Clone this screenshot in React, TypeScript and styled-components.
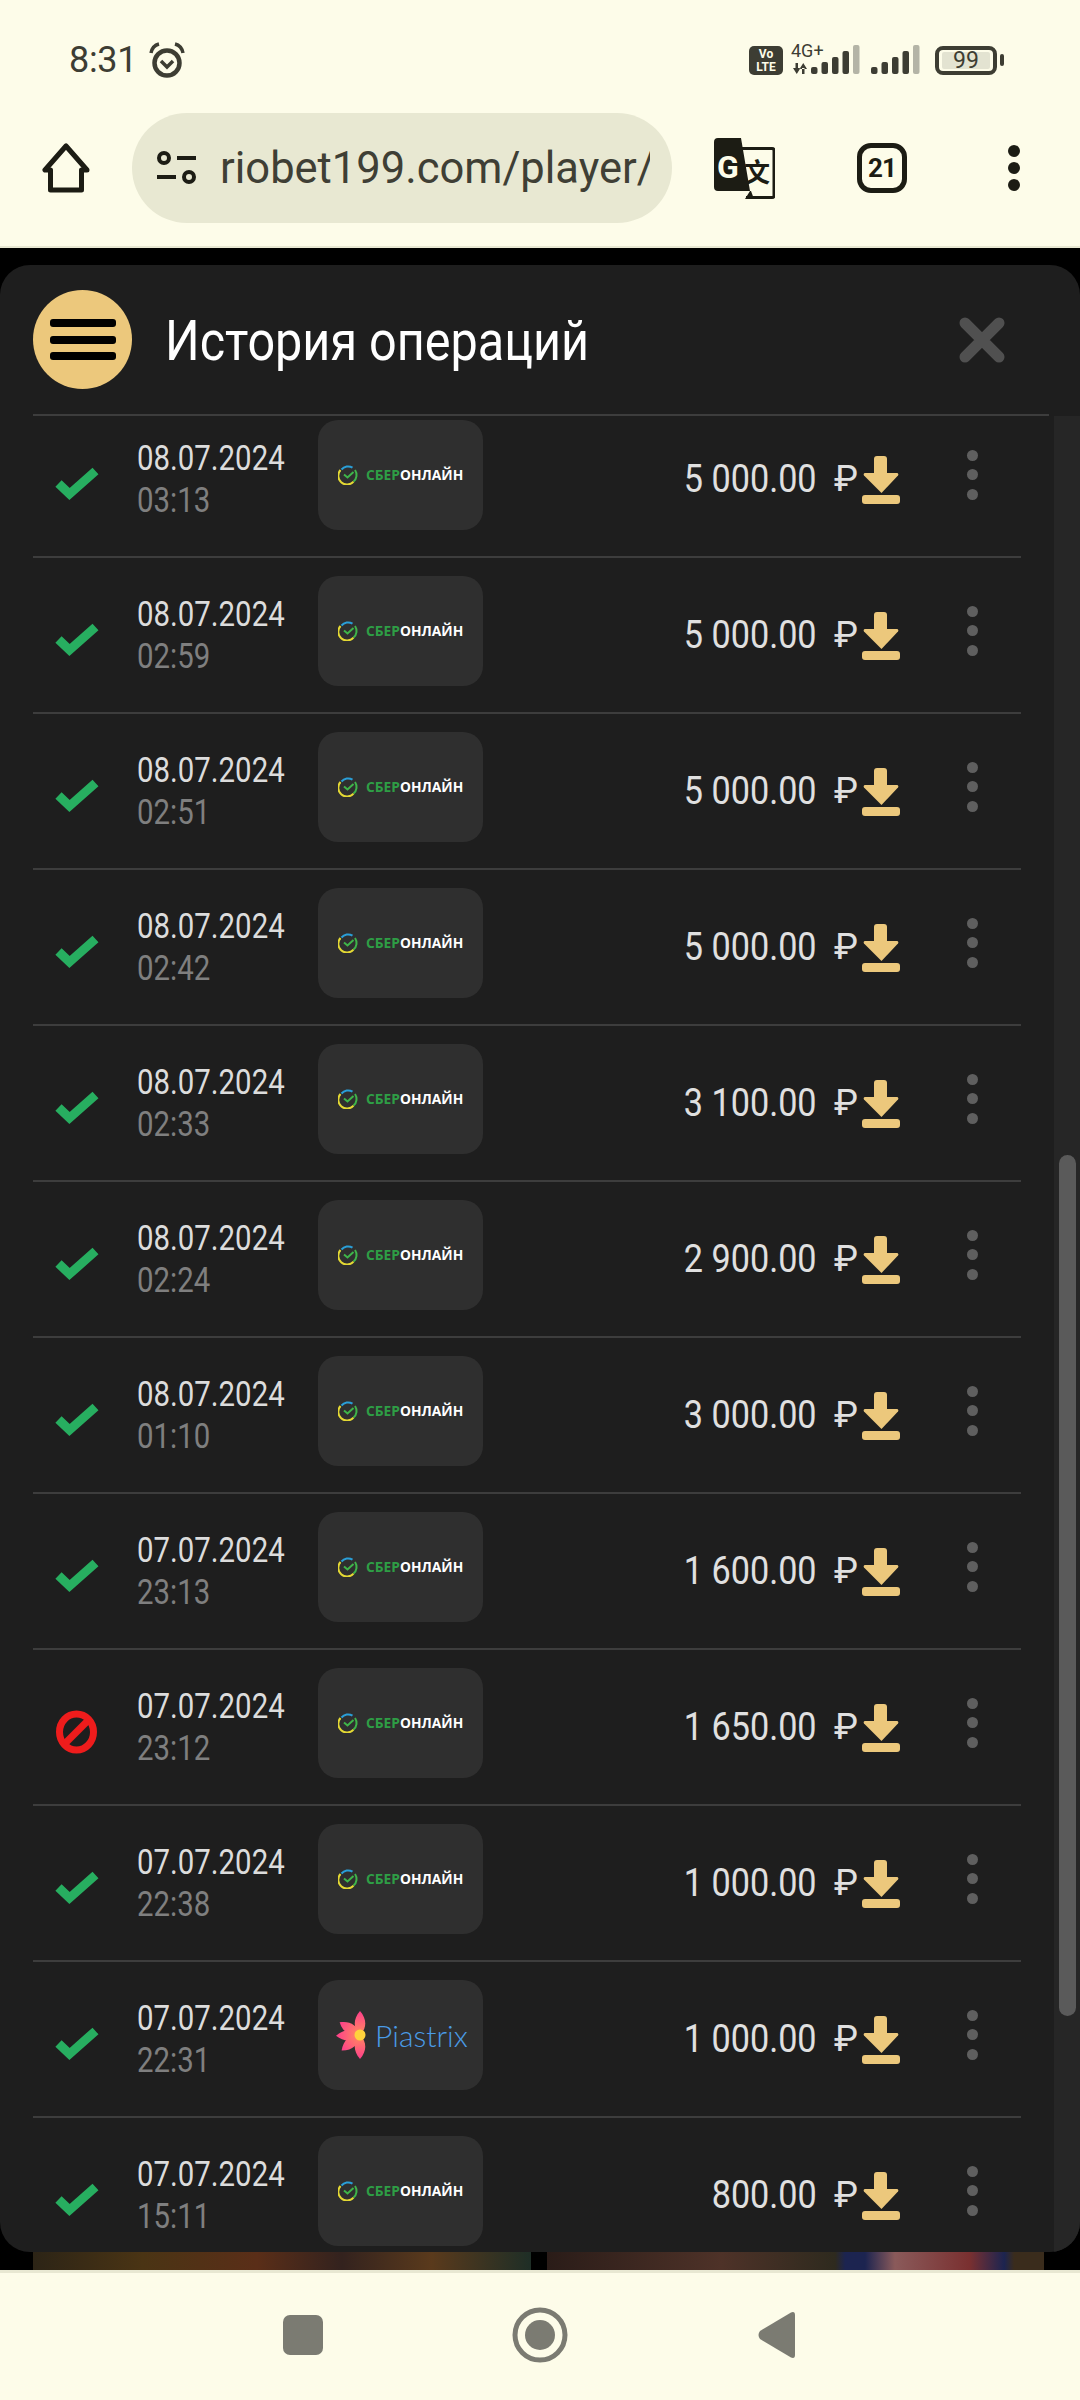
import React from 'react';
import styled, { createGlobalStyle } from 'styled-components';

const GlobalStyle = createGlobalStyle`
  html, body { margin: 0; padding: 0; background: #000; }
  * { box-sizing: border-box; }
  #root { width: 1080px; height: 2400px; overflow: hidden; }
`;

const Page = styled.div`
  width: 1080px;
  height: 2400px;
  display: flex;
  flex-direction: column;
  background: #000;
  font-family: Roboto, 'Liberation Sans', sans-serif;
`;

/* status bar */
const StatusBar = styled.div`
  height: 110px;
  padding: 40px 76px 30px 69px;
  background: #fdfce9;
  display: flex;
  align-items: center;
  justify-content: space-between;
  color: #3d3d33;
`;

const StatusLeft = styled.div`
  display: flex;
  align-items: center;
  gap: 11px;
`;

const Clock = styled.span`
  font-size: 36px;
  line-height: 40px;
  letter-spacing: -0.3px;
`;

const StatusRight = styled.div`
  display: flex;
  align-items: center;
`;

const VoLte = styled.div`
  width: 34px;
  height: 29px;
  border-radius: 5px;
  background: #3d3d33;
  color: #fdfce9;
  font-size: 12px;
  font-weight: 700;
  line-height: 13px;
  text-align: center;
  padding-top: 2px;
`;

const Battery = styled.div`
  width: 62px;
  height: 29px;
  margin-left: 14px;
  border: 4px solid #3d3d33;
  border-radius: 8px;
  padding: 2px 3px;
`;

const BatteryFill = styled.div`
  height: 100%;
  border-radius: 2px;
  background: #e3e3d1;
  font-size: 23px;
  line-height: 18px;
  text-align: center;
`;

const BatteryNub = styled.div`
  width: 4px;
  height: 12px;
  margin-left: 3px;
  border-radius: 2px;
  background: #3d3d33;
`;

/* browser toolbar */
const Toolbar = styled.div`
  height: 138px;
  padding: 0 0 20px 41px;
  background: #fdfce9;
  border-bottom: 2px solid #e8e8d2;
  display: flex;
  align-items: center;
  color: #1c1c14;
`;

const AddressPill = styled.div`
  width: 540px;
  height: 110px;
  margin-left: 41px;
  padding: 0 22px 0 25px;
  border-radius: 55px;
  background: #e8e8d2;
  display: flex;
  align-items: center;
  gap: 23px;
`;

const AddressText = styled.div`
  flex: 1;
  overflow: hidden;
  white-space: nowrap;
  font-size: 43.5px;
  color: #3f3f35;
`;

const TranslateSlot = styled.div`
  margin-left: 42px;
  display: flex;
`;

const TabCount = styled.div`
  width: 50px;
  height: 50px;
  margin-left: 82px;
  border: 5px solid #1c1c14;
  border-radius: 14px;
  display: flex;
  align-items: center;
  justify-content: center;
  font-size: 26px;
  font-weight: 700;
  letter-spacing: -1px;
`;

const ToolbarMenu = styled.div`
  margin-left: 101px;
  display: flex;
  flex-direction: column;
  gap: 5px;
`;

const ToolbarDot = styled.div`
  width: 12px;
  height: 12px;
  border-radius: 50%;
  background: #1c1c14;
`;

/* site content */
const Content = styled.div`
  height: 2022px;
  padding-top: 17px;
  background: #000;
  display: flex;
  flex-direction: column;
`;

const Panel = styled.div`
  height: 1987px;
  flex: none;
  background: #1e1e1e;
  border-radius: 30px;
  overflow: hidden;
  display: flex;
  flex-direction: column;
`;

const PanelHeader = styled.div`
  height: 149px;
  padding: 0 75px 0 33px;
  flex: none;
  display: flex;
  align-items: center;
`;

const MenuButton = styled.div`
  width: 99px;
  height: 99px;
  flex: none;
  border-radius: 50%;
  background: #ecc87c;
  display: flex;
  flex-direction: column;
  align-items: center;
  justify-content: center;
  gap: 8.5px;
`;

const MenuBar = styled.div`
  width: 66px;
  height: 8px;
  border-radius: 3px;
  background: #000;
`;

const PanelTitle = styled.h1`
  margin: 2px 0 0 33px;
  flex: 1;
  font-size: 56px;
  font-weight: 400;
  line-height: 64px;
  color: #fff;
  white-space: nowrap;
  transform: scaleX(0.867);
  transform-origin: left center;
`;

const HeaderLine = styled.div`
  height: 2px;
  flex: none;
  margin: 0 31px 0 33px;
  background: #3d3d3d;
`;

const ListArea = styled.div`
  flex: 1;
  min-height: 0;
  display: flex;
`;

const List = styled.div`
  flex: 1;
  min-width: 0;
  overflow: hidden;
  padding: 0 33px;
`;

const ScrolledRows = styled.div`
  margin-top: -16px;
`;

const Row = styled.div`
  height: 156px;
  padding: 18px 43px 26px 0;
  border-top: 2px solid #3d3d3d;
  display: flex;
  align-items: flex-start;
`;

const StatusCell = styled.div`
  width: 104px;
  flex: none;
  padding: 42px 0 0 22px;
  display: flex;
`;

const DateCell = styled.div`
  width: 181px;
  flex: none;
  padding-top: 17.5px;
  font-size: 35px;
  line-height: 42px;
`;

const CondensedLine = styled.div<{ $muted?: boolean }>`
  color: ${(p) => (p.$muted ? '#7f7f7f' : '#dcdcdc')};
  transform: scaleX(0.84);
  transform-origin: left center;
  white-space: nowrap;
`;

const MethodBox = styled.div<{ $inset: number }>`
  width: 165px;
  height: 110px;
  flex: none;
  border-radius: 20px;
  background: #2f2f2f;
  padding-left: ${(p) => p.$inset}px;
  display: flex;
  align-items: center;
`;

const SberText = styled.span`
  margin-left: 8px;
  font-family: 'Open Sans', Roboto, sans-serif;
  font-size: 13.8px;
  font-weight: 700;
  line-height: 16px;
  white-space: nowrap;
  color: #2e9e45;
`;

const SberOnline = styled.span`
  color: #fff;
`;

const PiastrixText = styled.span`
  margin-left: 7px;
  font-family: Lato, Roboto, sans-serif;
  font-size: 30px;
  font-weight: 300;
  line-height: 36px;
  color: #4a9be6;
`;

const AmountCell = styled.div`
  flex: 1;
  margin-top: 37px;
  display: flex;
  justify-content: flex-end;
  align-items: center;
  height: 44px;
  color: #e0e0e0;
  font-size: 38px;
  white-space: nowrap;
`;

const AmountText = styled.span`
  transform: scaleX(0.9);
  transform-origin: right center;
`;

const Ruble = styled.span`
  width: 24px;
  margin-left: 17px;
  font-size: 36px;
`;

const DownloadSlot = styled.div`
  margin: 36px 0 0 4px;
  display: flex;
`;

const RowMenu = styled.div`
  margin: 30px 0 0 67px;
  width: 11px;
  flex: none;
  display: flex;
  flex-direction: column;
  gap: 8.3px;
`;

const RowDot = styled.div`
  width: 11px;
  height: 11px;
  border-radius: 50%;
  background: #5f5f5f;
`;

const ScrollTrack = styled.div`
  width: 26px;
  flex: none;
  padding: 739px 0 0 5px;
  background: #262626;
`;

const ScrollThumb = styled.div`
  width: 17px;
  height: 861px;
  border-radius: 9px;
  background: #5a5a5a;
`;

const BehindStrip = styled.div`
  height: 18px;
  padding: 0 33px;
  display: flex;
  gap: 16px;
`;

const GameThumb = styled.div<{ $wide: number; $bg: string }>`
  width: ${(p) => p.$wide}px;
  background: ${(p) => p.$bg};
`;

/* android nav */
const NavBar = styled.div`
  height: 130px;
  padding-bottom: 3px;
  background: #fdfce9;
  border-top: 3px solid #e8e8d2;
  display: flex;
  align-items: center;
  justify-content: center;
  gap: 187px;
`;

const NavSquare = styled.div`
  width: 40px;
  height: 40px;
  border-radius: 7px;
  background: #7b7b72;
`;

const Svg = styled.svg`
  display: block;
  flex: none;
`;

const ink = '#3d3d33';

const AlarmIcon = () => (
  <Svg width="38" height="36" viewBox="0 0 38 36" fill="none" stroke={ink}>
    <circle cx="19" cy="21" r="12.5" strokeWidth="4.5" />
    <path d="M13 19l6 6 6-6" strokeWidth="3.5" />
    <path d="M3 11C4 6 7 3 11 2M35 11C34 6 31 3 27 2" strokeWidth="3.5" />
  </Svg>
);

const NetworkIcon = () => {
  const bars = (x0: number, pitch: number) =>
    [7, 12, 17, 23, 29].map((h, i) => (
      <rect
        key={i}
        x={x0 + i * pitch}
        y={30 - h}
        width="6.5"
        height={h}
        rx="2"
        fill={i === 4 ? '#b4b4a6' : ink}
      />
    ));
  return (
    <Svg width="130" height="32" viewBox="0 0 130 32" style={{ marginLeft: 8 }}>
      <text x="0" y="13" fontFamily="Roboto, sans-serif" fontSize="18" fill={ink}>
        4G+
      </text>
      <path d="M4.500 19h2.500v6H4.500zM2 24h7.500l-3.750 6zM11 24h2.500v6H11zM8.500 25h7.500l-3.750-6z" fill={ink} />
      {bars(20, 10.5)}
      {bars(80, 10.5)}
    </Svg>
  );
};

const HomeIcon = () => (
  <Svg width="50" height="50" viewBox="0 0 50 50" fill="none" stroke="#1c1c14" strokeWidth="5" strokeLinejoin="round">
    <path d="M25 3L4 27h5.500v20h31V27H46z" />
  </Svg>
);

const TuneIcon = () => (
  <Svg width="40" height="34" viewBox="0 0 40 34" fill="none" stroke="#1c1c14" strokeWidth="4">
    <circle cx="7" cy="7" r="5" />
    <path d="M20 7h19M0 26h19" />
    <circle cx="32" cy="26" r="5" />
  </Svg>
);

const TranslateIcon = () => (
  <Svg width="61" height="61" viewBox="0 0 61 61">
    <path d="M28 10.500h30a2 2 0 0 1 2 2v45a2 2 0 0 1-2 2H32" fill="#fdfce9" stroke="#1c1c14" strokeWidth="3" />
    <path d="M4 0h23l9 53-5 8h9l-3-8H4a4 4 0 0 1-4-4V4a4 4 0 0 1 4-4z" fill="#1c1c14" />
    <text x="3" y="40" fontFamily="Roboto, sans-serif" fontSize="32" fontWeight="700" fill="#fdfce9">
      G
    </text>
    <text x="30" y="44" fontFamily="'Noto Sans CJK SC', sans-serif" fontSize="26" fontWeight="700" fill="#1c1c14">
      文
    </text>
  </Svg>
);

const CloseIcon = () => (
  <Svg width="46" height="46" viewBox="0 0 46 46" stroke="#505050" strokeWidth="11" strokeLinecap="round">
    <path d="M6 6l34 34M40 6L6 40" />
  </Svg>
);

const CheckIcon = () => (
  <Svg width="44" height="44" viewBox="0 0 44 44" fill="none" stroke="#27ae60" strokeWidth="9">
    <path d="M3.500 21.500l11 10.500 26-23" />
  </Svg>
);

const BanIcon = () => (
  <Svg width="44" height="44" viewBox="0 0 44 44" fill="none" stroke="#ee1c1c" strokeWidth="7">
    <ellipse cx="21.500" cy="22" rx="17" ry="18" />
    <path d="M9.500 34L33.500 10" />
  </Svg>
);

const DownloadIcon = () => (
  <Svg width="38" height="48" viewBox="0 0 38 48" fill="#ecc87c">
    <rect x="12" y="0" width="13" height="22" rx="3" />
    <path d="M3 17h32a1.500 1.500 0 0 1 1 2.500L19.500 37 2 19.500A1.500 1.500 0 0 1 3 17z" />
    <rect x="0" y="39" width="38" height="9" rx="3" />
  </Svg>
);

const SberMark = () => (
  <Svg width="20" height="20" viewBox="0 0 20 20" fill="none" strokeWidth="2">
    <path d="M3.500 4.500A8.600 8.600 0 0 1 14.500 2.600" stroke="#2a9fd8" />
    <path d="M17 5a8.600 8.600 0 0 1-1.500 11.500" stroke="#3fb54a" />
    <path d="M15.500 16.600A8.600 8.600 0 0 1 2.500 5" stroke="#e4d934" />
    <path d="M6 9.500l3.500 3 6-5.500" stroke="#3fb54a" />
  </Svg>
);

const SberLogo = () => (
  <MethodBox $inset={20}>
    <SberMark />
    <SberText>
      СБЕР<SberOnline>ОНЛАЙН</SberOnline>
    </SberText>
  </MethodBox>
);

const PiastrixLogo = () => (
  <MethodBox $inset={18}>
    <Svg width="32" height="48" viewBox="0 0 32 48">
      <defs>
        <linearGradient id="petal" x1="0" y1="0" x2="0" y2="1">
          <stop offset="0" stopColor="#ff3d8b" />
          <stop offset="1" stopColor="#ff8d5e" />
        </linearGradient>
      </defs>
      {[0, -58, -92, -130, 180].map((angle) => (
        <path
          key={angle}
          d="M0 0C-7-7-7-16 0-24C7-16 7-7 0 0z"
          fill="url(#petal)"
          transform={`translate(24 24) rotate(${angle})`}
        />
      ))}
      <circle cx="24" cy="24" r="5.500" fill="#ffd23c" />
    </Svg>
    <PiastrixText>Piastrix</PiastrixText>
  </MethodBox>
);

type Operation = {
  date: string;
  time: string;
  amount: string;
  failed?: boolean;
  method?: 'sber' | 'piastrix';
};

const operations: Operation[] = [
  { date: '08.07.2024', time: '03:13', amount: '5 000.00' },
  { date: '08.07.2024', time: '02:59', amount: '5 000.00' },
  { date: '08.07.2024', time: '02:51', amount: '5 000.00' },
  { date: '08.07.2024', time: '02:42', amount: '5 000.00' },
  { date: '08.07.2024', time: '02:33', amount: '3 100.00' },
  { date: '08.07.2024', time: '02:24', amount: '2 900.00' },
  { date: '08.07.2024', time: '01:10', amount: '3 000.00' },
  { date: '07.07.2024', time: '23:13', amount: '1 600.00' },
  { date: '07.07.2024', time: '23:12', amount: '1 650.00', failed: true },
  { date: '07.07.2024', time: '22:38', amount: '1 000.00' },
  { date: '07.07.2024', time: '22:31', amount: '1 000.00', method: 'piastrix' },
  { date: '07.07.2024', time: '15:11', amount: '800.00' },
];

export default function App() {
  return (
    <Page>
      <GlobalStyle />
      <StatusBar>
        <StatusLeft>
          <Clock>8:31</Clock>
          <AlarmIcon />
        </StatusLeft>
        <StatusRight>
          <VoLte>
            Vo
            <br />
            LTE
          </VoLte>
          <NetworkIcon />
          <Battery>
            <BatteryFill>99</BatteryFill>
          </Battery>
          <BatteryNub />
        </StatusRight>
      </StatusBar>

      <Toolbar>
        <HomeIcon />
        <AddressPill>
          <TuneIcon />
          <AddressText>riobet199.com/player/</AddressText>
        </AddressPill>
        <TranslateSlot>
          <TranslateIcon />
        </TranslateSlot>
        <TabCount>21</TabCount>
        <ToolbarMenu>
          <ToolbarDot />
          <ToolbarDot />
          <ToolbarDot />
        </ToolbarMenu>
      </Toolbar>

      <Content>
        <Panel>
          <PanelHeader>
            <MenuButton>
              <MenuBar />
              <MenuBar />
              <MenuBar />
            </MenuButton>
            <PanelTitle>История операций</PanelTitle>
            <CloseIcon />
          </PanelHeader>
          <HeaderLine />
          <ListArea>
            <List>
              <ScrolledRows>
                {operations.map((op) => (
                  <Row key={op.date + op.time}>
                    <StatusCell>{op.failed ? <BanIcon /> : <CheckIcon />}</StatusCell>
                    <DateCell>
                      <CondensedLine>{op.date}</CondensedLine>
                      <CondensedLine $muted>{op.time}</CondensedLine>
                    </DateCell>
                    {op.method === 'piastrix' ? <PiastrixLogo /> : <SberLogo />}
                    <AmountCell>
                      <AmountText>{op.amount}</AmountText>
                      <Ruble>₽</Ruble>
                    </AmountCell>
                    <DownloadSlot>
                      <DownloadIcon />
                    </DownloadSlot>
                    <RowMenu>
                      <RowDot />
                      <RowDot />
                      <RowDot />
                    </RowMenu>
                  </Row>
                ))}
              </ScrolledRows>
            </List>
            <ScrollTrack>
              <ScrollThumb />
            </ScrollTrack>
          </ListArea>
        </Panel>
        <BehindStrip>
          <GameThumb
            $wide={498}
            $bg="linear-gradient(90deg,#2c2416 0%,#4a3414 22%,#5a2e18 45%,#33221e 62%,#5a3a1c 80%,#1e2e26 100%)"
          />
          <GameThumb
            $wide={497}
            $bg="linear-gradient(90deg,#2a1c18 0%,#4e3228 35%,#2e2a1e 58%,#1c2450 60%,#1c2450 64%,#8a5a5a 70%,#7a3030 85%,#1c2450 92%,#3a2c1c 94%,#3a2c1c 100%)"
          />
        </BehindStrip>
      </Content>

      <NavBar>
        <NavSquare />
        <Svg width="60" height="60" viewBox="0 0 60 60">
          <circle cx="30" cy="30" r="25" fill="none" stroke="#7b7b72" strokeWidth="5" />
          <circle cx="30" cy="30" r="15" fill="#7b7b72" />
        </Svg>
        <Svg width="40" height="48" viewBox="0 0 40 48">
          <path d="M3 20L34 1.500Q38 0 38 4V44Q38 48 34 46.500L3 28Q0 24 3 20z" fill="#7b7b72" />
        </Svg>
      </NavBar>
    </Page>
  );
}
